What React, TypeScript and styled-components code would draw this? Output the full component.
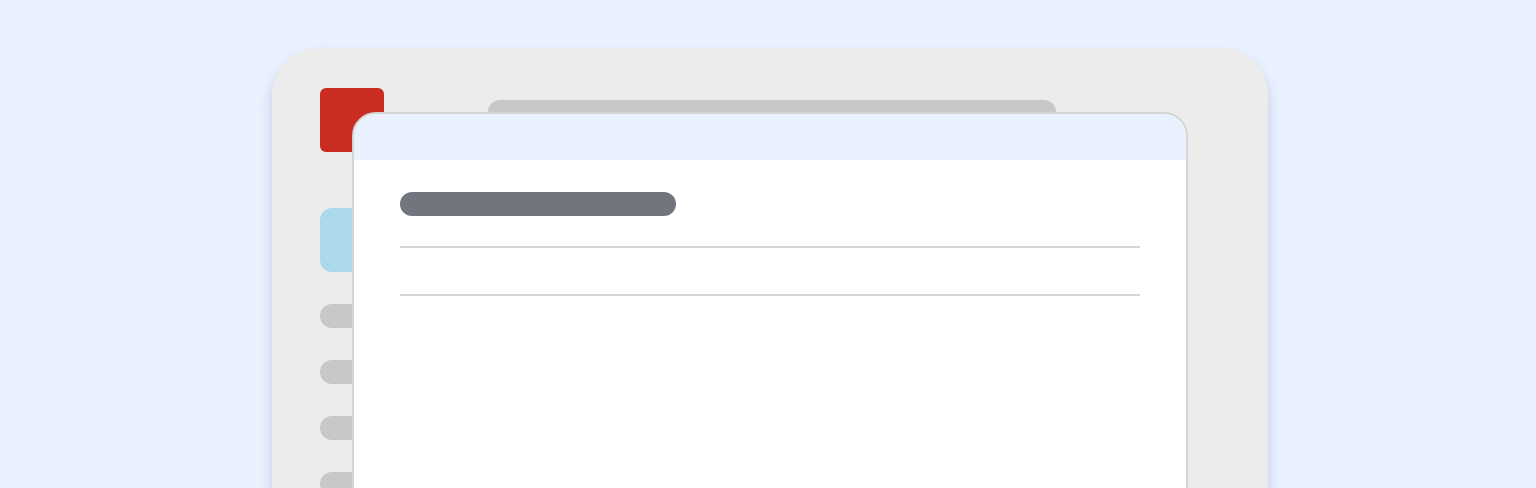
import React from "react";
import styled, { createGlobalStyle } from "styled-components";

const Global = createGlobalStyle`
  html, body { margin: 0; padding: 0; background: #e9f0fe; overflow: hidden; }
  body { font-family: "Liberation Sans", Arial, sans-serif; }
`;

const Page = styled.div`
  width: 1536px;
  height: 488px;
  padding-top: 48px;
  padding-left: 272px;
  box-sizing: border-box;
  overflow: hidden;
`;

const Device = styled.div`
  position: relative;
  width: 996px;
  height: 640px;
  box-sizing: border-box;
  background: #ececec;
  border-radius: 48px;
  box-shadow: 0 8px 12px rgba(80, 100, 160, 0.28);
  padding: 40px 48px;
  display: flex;
  gap: 104px;
`;

const Sidebar = styled.div`
  display: flex;
  flex-direction: column;
  width: 64px;
`;

const Logo = styled.div`
  width: 64px;
  height: 64px;
  border-radius: 6px;
  background: #c92c23;
  margin-bottom: 56px;
`;

const ActiveItem = styled.div`
  width: 64px;
  height: 64px;
  border-radius: 12px;
  background: #acd8ec;
  margin-bottom: 32px;
`;

const NavPill = styled.div`
  width: 64px;
  height: 24px;
  border-radius: 12px;
  background: #c8c8c8;
  margin-bottom: 32px;
`;

const Main = styled.div`
  flex: 1;
  padding-top: 12px;
`;

const SearchBar = styled.div`
  width: 568px;
  height: 24px;
  border-radius: 12px;
  background: #c8c8c8;
`;

const Panel = styled.div`
  position: absolute;
  left: 80px;
  top: 64px;
  width: 836px;
  height: 600px;
  box-sizing: border-box;
  background: #ffffff;
  border: 2px solid #d4d4d4;
  border-radius: 24px 24px 0 0;
  overflow: hidden;
`;

const PanelHeader = styled.div`
  height: 46px;
  background: #e9f0fe;
`;

const PanelBody = styled.div`
  padding: 32px 46px 0 46px;
  display: flex;
  flex-direction: column;
`;

const Title = styled.div`
  width: 276px;
  height: 24px;
  border-radius: 12px;
  background: #72757d;
  margin-bottom: 30px;
`;

const Divider = styled.div<{ $gap: number }>`
  height: 2px;
  background: #d6d6d6;
  margin-bottom: ${(p) => p.$gap}px;
`;

export default function App() {
  return (
    <>
      <Global />
      <Page>
        <Device>
          <Sidebar>
            <Logo />
            <ActiveItem />
            <NavPill />
            <NavPill />
            <NavPill />
            <NavPill />
          </Sidebar>
          <Main>
            <SearchBar />
          </Main>
          <Panel>
            <PanelHeader />
            <PanelBody>
              <Title />
              <Divider $gap={46} />
              <Divider $gap={0} />
            </PanelBody>
          </Panel>
        </Device>
      </Page>
    </>
  );
}
